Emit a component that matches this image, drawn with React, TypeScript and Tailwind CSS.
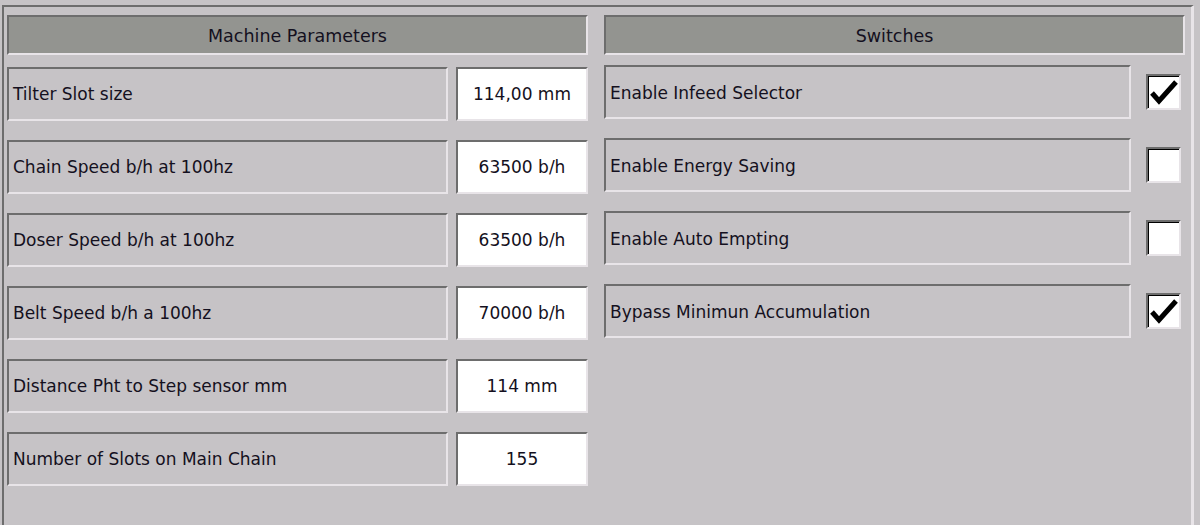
import React from "react";

const params: [string, string][] = [
  ["Tilter Slot size", "114,00 mm"],
  ["Chain Speed b/h at 100hz", "63500 b/h"],
  ["Doser Speed b/h at 100hz", "63500 b/h"],
  ["Belt Speed b/h a 100hz", "70000 b/h"],
  ["Distance Pht to Step sensor mm", "114 mm"],
  ["Number of Slots on Main Chain", "155"],
];

const switches: [string, boolean][] = [
  ["Enable Infeed Selector", true],
  ["Enable Energy Saving", false],
  ["Enable Auto Empting", false],
  ["Bypass Minimun Accumulation", true],
];

const sunken =
  "border-t-2 border-l-2 border-b-2 border-r-2 border-t-[#6d6d6d] border-l-[#6d6d6d] border-b-[#e8e4e8] border-r-[#e8e4e8]";

function Check({ on }: { on: boolean }) {
  return (
    <div className={`w-[35px] h-[36px] bg-white ${sunken} shadow-[inset_1px_1px_0_#000] flex-none`}>
      {on && (
        <svg width="31" height="32" viewBox="0 0 31 32">
          <polyline
            points="4,17 11,25 28,6"
            fill="none"
            stroke="#000"
            strokeWidth="5"
            strokeLinejoin="miter"
          />
        </svg>
      )}
    </div>
  );
}

export default function App() {
  return (
    <div
      className="w-[1200px] h-[525px] bg-[#c6c3c6] pt-[5px] pl-[2px] overflow-hidden text-[#141020]"
      style={{ fontFamily: '"DejaVu Sans", Verdana, sans-serif' }}
    >
      <div className="w-[1192px] h-[530px] border-t-2 border-l-2 border-r-[3px] border-t-[#6d6d6d] border-l-[#6d6d6d] border-r-[#e8e4e8] pl-[3px] pt-[8px] flex gap-[16px] text-[17px]">
        {/* Left column */}
        <div className="w-[581px] flex flex-col">
          <div className={`h-[40px] bg-[#939490] ${sunken} flex items-center justify-center text-[17.5px] pt-[2px]`}>
            Machine Parameters
          </div>
          <div className="flex flex-col gap-[19px] mt-[12px]">
            {params.map(([label, value]) => (
              <div key={label} className="flex gap-[8px] h-[54px]">
                <div className={`w-[441px] ${sunken} flex items-center pl-[4px] pt-[2px]`}>{label}</div>
                <div className={`w-[132px] bg-white ${sunken} flex items-center justify-center pt-[2px]`}>{value}</div>
              </div>
            ))}
          </div>
        </div>
        {/* Right column */}
        <div className="w-[581px] flex flex-col">
          <div className={`h-[40px] bg-[#939490] ${sunken} flex items-center justify-center text-[17.5px] pt-[2px]`}>
            Switches
          </div>
          <div className="flex flex-col gap-[19px] mt-[10px]">
            {switches.map(([label, on]) => (
              <div key={label} className="flex h-[54px] items-center">
                <div className={`w-[527px] h-[54px] ${sunken} flex items-center pl-[4px] pt-[4px]`}>{label}</div>
                <div className="ml-[15px]">
                  <Check on={on} />
                </div>
              </div>
            ))}
          </div>
        </div>
      </div>
    </div>
  );
}
